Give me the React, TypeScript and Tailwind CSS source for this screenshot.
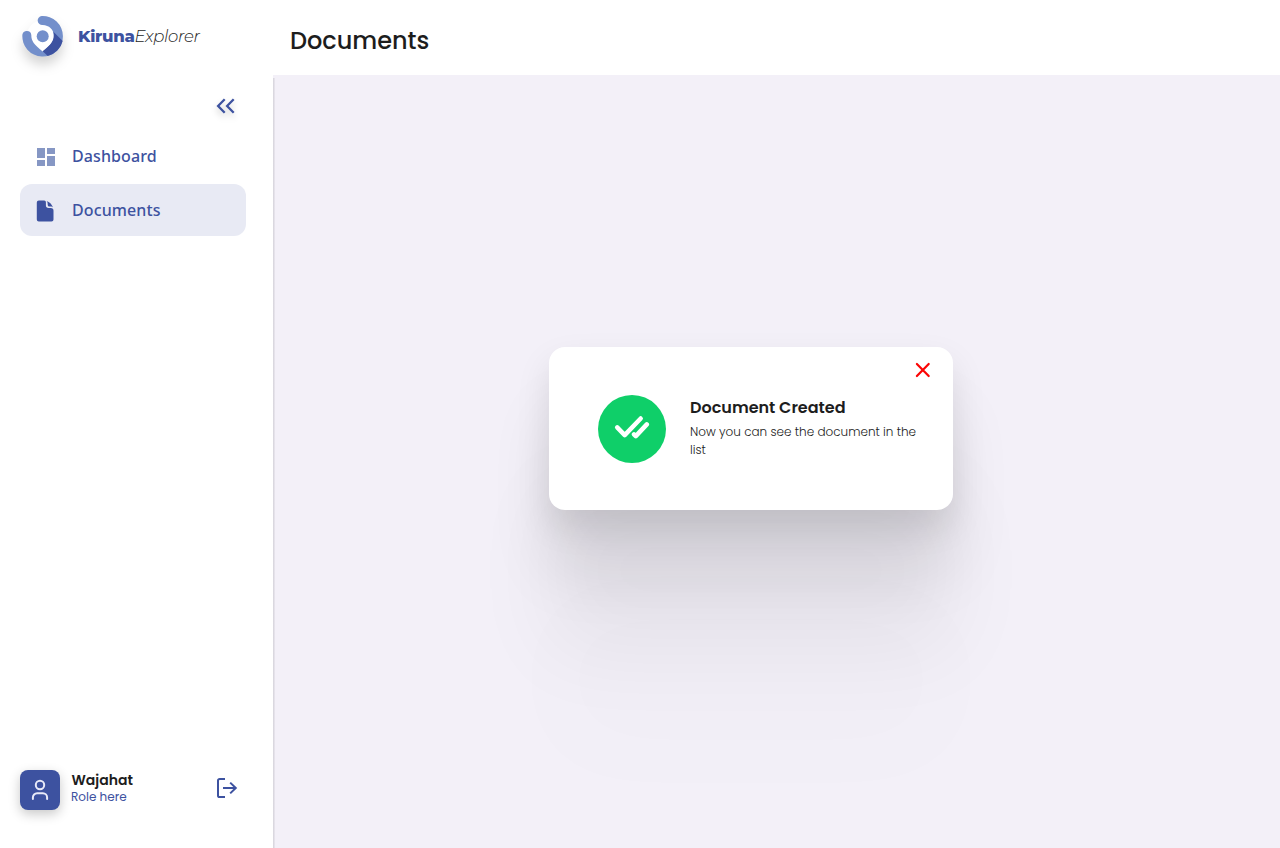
import React from "react";

function Logo() {
  return (
    <svg
      className="h-11 w-11 shrink-0 overflow-visible drop-shadow-[0_8px_6px_rgba(0,0,0,0.17)]"
      viewBox="0 0 44 44"
      fill="none"
    >
      <circle cx="21.7" cy="22.3" r="16" fill="white" />
      <path
        d="M20.7 2 A20.3 20.3 0 1 1 1.4 20.6 A4.5 4.5 0 0 1 10.3 21 C10.3 27.5 13 30 21.7 37.5 C29.5 31 33 28 33 22.3 C33 15.5 28 11.2 21.7 11 A4.5 4.5 0 0 1 20.7 2Z"
        fill="#738fcb"
      />
      <path
        d="M32.4 17.7 L41.7 27 A20.3 20.3 0 0 1 26.7 42 L21.7 37.2 C29.5 31 34.2 26.5 32.4 17.7Z"
        fill="#3d52a0"
      />
      <circle cx="21.7" cy="22.3" r="6" fill="#738fcb" />
    </svg>
  );
}

function Sidebar() {
  return (
    <aside className="flex h-full w-[273px] shrink-0 flex-col bg-white">
      <div className="flex h-[75px] items-start pl-[21px] pt-[14px]">
        <Logo />
        <div className="ml-[13px] mt-[10px] whitespace-nowrap font-['Montserrat','Inter',sans-serif] text-[16.5px] leading-6">
          <span className="font-extrabold tracking-[-0.28px] text-[#3d52a0]">Kiruna</span>
          <span className="font-light italic tracking-[-0.3px] text-[#1d1d1d]">Explorer</span>
        </div>
      </div>

      <div className="flex h-[55px] items-start justify-end pr-[38px] pt-[22px]">
        <svg
          className="h-[18px] w-[18px] overflow-visible drop-shadow-[0_4px_3px_rgba(0,0,0,0.2)]"
          viewBox="0 0 18 18"
          fill="none"
          stroke="#3d52a0"
          strokeWidth="2.3"
        >
          <path d="M7.7 2.2 1.1 9l6.6 6.8M16.7 2.2 10.1 9l6.6 6.8" />
        </svg>
      </div>

      <nav className="flex flex-col gap-0.5 pl-5 pr-[27px] font-['Noto_Sans',sans-serif] text-base font-medium tracking-[0.1px] text-[#3d52a0]">
        <a className="flex h-[52px] items-center pl-[17px]">
          <svg className="mt-[2px] h-[18px] w-[18px]" viewBox="0 0 18 18" fill="#8697c4">
            <path d="M0 0h8v10H0zM10 0h8v6h-8zM0 12h8v6H0zM10 8h8v10h-8z" />
          </svg>
          <span className="ml-[17px]">Dashboard</span>
        </a>
        <a className="flex h-[52px] items-center rounded-xl bg-[#e8eaf4] pl-4">
          <svg className="mt-[2px] h-[22px] w-[18px]" viewBox="0 0 18 22" fill="#3d52a0">
            <path d="M2.8.5h5.4c1 0 1.7.8 1.7 1.8v3A2.7 2.7 0 0 0 12.6 8h2.2a2.7 2.7 0 0 1 2.7 2.7v8.8a2 2 0 0 1-2 2H2.8a2 2 0 0 1-2-2v-17a2 2 0 0 1 2-2Z" />
            <path d="M10.6.9c2.8.8 5.3 3.3 6.3 6.3-1-.5-1.8-.6-3-.6-1.4 0-2.2-.7-2.2-1.9 0-1.6-.1-2.6-1.1-3.8Z" />
          </svg>
          <span className="ml-[18px]">Documents</span>
        </a>
      </nav>

      <div className="mt-auto flex h-[78px] items-start pl-5">
        <div className="flex h-10 w-10 items-center justify-center rounded-lg bg-[#3d52a0] shadow-[0_4px_12px_rgba(0,0,0,0.22)]">
          <svg
            className="h-6 w-6"
            viewBox="0 0 24 24"
            fill="none"
            stroke="#e8eaf8"
            strokeWidth="2"
            strokeLinecap="round"
          >
            <circle cx="12" cy="7" r="4.2" />
            <path d="M4.9 21v-1.5a4.2 4.2 0 0 1 4.2-4.2h5.8a4.2 4.2 0 0 1 4.2 4.2V21" />
          </svg>
        </div>
        <div className="ml-[11px] w-[146px] font-['Poppins','Inter',sans-serif]">
          <div className="h-[18px] pl-[0.5px] text-sm font-semibold leading-5 text-[#1d1d1d]">Wajahat</div>
          <div className="text-xs leading-[18px] text-[#3d52a0]">Role here</div>
        </div>
        <svg
          className="mt-2 h-5 w-[22px]"
          viewBox="0 0 22 20"
          fill="none"
          stroke="#3d52a0"
          strokeWidth="2"
        >
          <path d="M8 1H2.6A1.6 1.6 0 0 0 1 2.6v14.8A1.6 1.6 0 0 0 2.6 19H8M6 10h12.7M13.2 4.6l5.6 5.4-5.6 5.4" />
        </svg>
      </div>
    </aside>
  );
}

function SuccessDialog() {
  return (
    <div className="ml-[274px] mt-[272px] flex h-[163px] w-[404px] flex-col rounded-2xl bg-white font-['Poppins','Inter',sans-serif] shadow-[0_16px_34px_rgba(0,0,0,0.1),0_63px_63px_rgba(0,0,0,0.09),0_141px_85px_rgba(0,0,0,0.05),0_251px_100px_rgba(0,0,0,0.01)]">
      <button className="ml-auto mr-[22px] mt-[15px] h-4 w-4">
        <svg
          className="h-4 w-4"
          viewBox="0 0 16 16"
          stroke="#fb0505"
          strokeWidth="2.2"
          strokeLinecap="round"
        >
          <path d="M1.9 2 13.7 14M13.7 2 1.9 14" />
        </svg>
      </button>
      <div className="flex items-start pl-[49px] pt-[17px]">
        <div className="flex h-[68px] w-[68px] shrink-0 items-center justify-center rounded-full bg-[#0fcf69]">
          <svg
            className="mb-1 h-6 w-[36px]"
            viewBox="0 0 36 24"
            fill="none"
            stroke="white"
            strokeWidth="4.5"
            strokeLinecap="round"
            strokeLinejoin="round"
          >
            <path d="m3.2 12.4 7.5 7.7L26.7 3.5" />
            <path d="m20 19.3 1.8 1.8L32.8 9.4" />
          </svg>
        </div>
        <div className="ml-6 whitespace-nowrap pt-px">
          <div className="text-base font-semibold leading-6 text-[#1d1d1d]">Document Created</div>
          <p className="mt-[3px] text-xs font-light leading-[18px] text-[#1d1d1d]">
            Now you can see the document in the
            <br />
            list
          </p>
        </div>
      </div>
    </div>
  );
}

export default function App() {
  return (
    <div className="flex h-[848px] w-[1280px] overflow-hidden bg-white">
      <Sidebar />
      <main className="flex min-w-0 flex-1 flex-col">
        <header className="flex h-[75px] shrink-0 items-start bg-white pl-[17px] pt-[23px]">
          <h1 className="font-['Poppins','Inter',sans-serif] text-2xl font-medium leading-9 text-[#1d1d1d]">
            Documents
          </h1>
        </header>
        <section className="flex flex-1 bg-[#f3f0f8]">
          <div className="mt-[3px] w-[2px] shrink-0 bg-linear-to-r from-[#d4d2da] to-[#ebe8f0]" />
          <SuccessDialog />
        </section>
      </main>
    </div>
  );
}
